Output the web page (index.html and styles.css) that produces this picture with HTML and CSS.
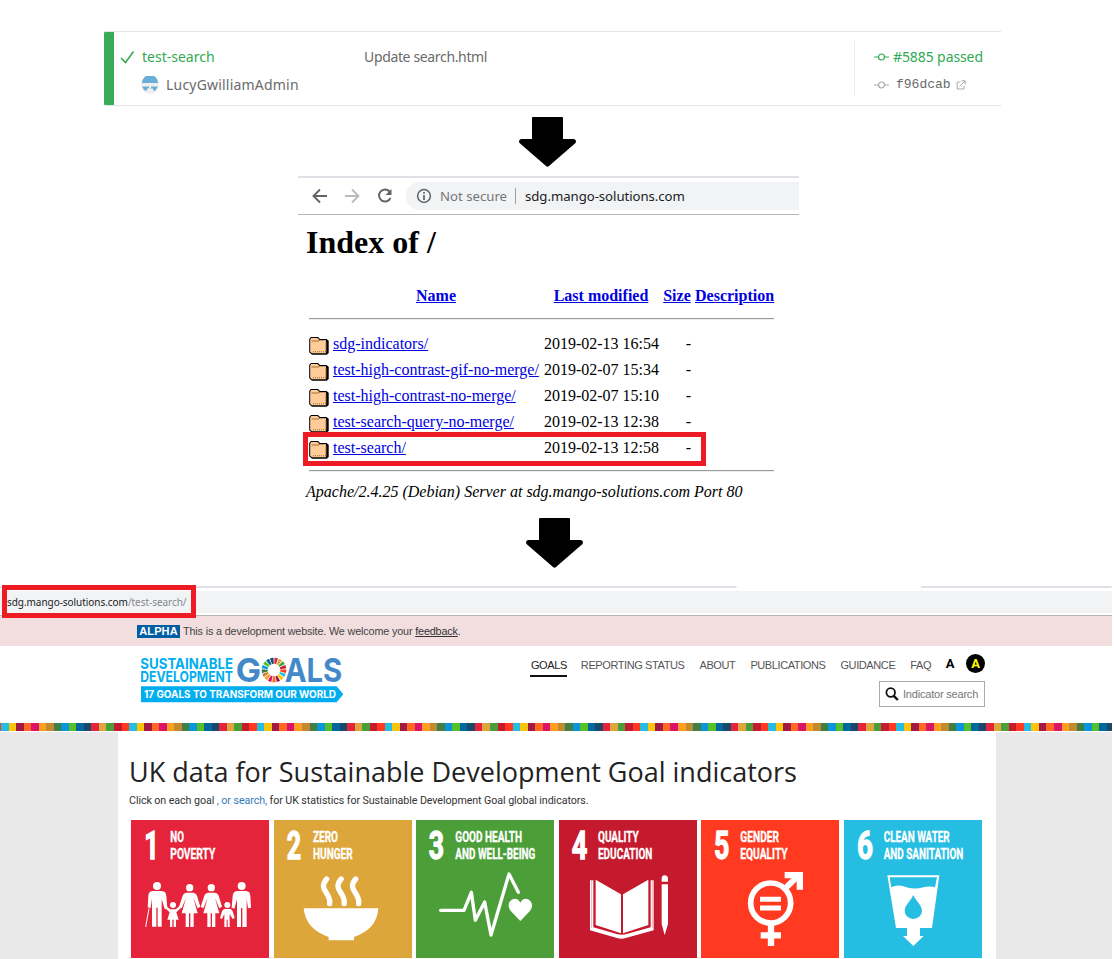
FILE: index.html
```html
<!DOCTYPE html>
<html lang="en">
<head>
<meta charset="utf-8">
<title>Search test deployment</title>
<link rel="stylesheet" href="styles.css">
</head>
<body>
<svg width="0" height="0" class="defs" aria-hidden="true">
  <symbol id="folder" viewBox="0 0 20 22">
    <path d="M2 4h7l2 2h6.500l2.200 1.800V20l-2 1.700H3L.2 19.300V6z" fill="#000"/>
    <path d="M2.300 5h6l2.500 2.300h6.200v13H3L1.200 18.800V6.500z" fill="#fc9"/>
    <path d="M2.500 8h7M9.300 8l1.700-1M17 9v10" fill="none" stroke="#963" stroke-width=".9"/>
    <path d="M4 18.800h13" stroke="#963" stroke-dasharray="1 1"/>
  </symbol>
  <symbol id="down" viewBox="0 0 57 50">
    <path d="M13 1q0-1 1-1h29q1 0 1 1v21h11q3 1 1.500 4L30 49q-1.500 1.500-3 0L.5 26q-1.500-3 1.500-4h11z" fill="#000"/>
  </symbol>
  <symbol id="commit" viewBox="0 0 15 8">
    <path d="M0 4h4M11 4h4" stroke="currentColor" stroke-width="1.100"/>
    <circle cx="7.500" cy="4" r="3" fill="none" stroke="currentColor" stroke-width="1.200"/>
  </symbol>
</svg>

<section class="pipeline">
  <div class="status"></div>
  <div class="branch">
    <div class="branch-name"><svg width="15" height="14" viewBox="0 0 15 14"><path d="M1 8l4.500 4.500L13.500 1.500" fill="none" stroke="#31a952" stroke-width="1.500"/></svg><span>test-search</span></div>
    <div class="author"><svg width="18" height="18" viewBox="0 0 18 18"><circle cx="9" cy="9" r="9" fill="#eee"/><path d="M1 7a8 8 0 0 1 16 0zM1 10.500h7v2H6v2H3.500zM17 10.500h-7v2h2v2h2.500z" fill="#68aed6"/></svg><span>LucyGwilliamAdmin</span></div>
  </div>
  <div class="message">Update search.html</div>
  <div class="build">
    <div class="passed"><svg width="15" height="8"><use href="#commit"/></svg><span>#5885 passed</span></div>
    <div class="sha"><svg width="15" height="8"><use href="#commit"/></svg><span>f96dcab</span><svg class="ext" width="10" height="10" viewBox="0 0 10 10"><path d="M4.500 2H1.200v7H8V6M3.500 6.500L9 1M5.500.8h3.700v3.700" fill="none" stroke="#aaa"/></svg></div>
  </div>
</section>

<svg class="arrow first" width="57" height="50"><use href="#down"/></svg>

<section class="browser">
  <div class="toolbar">
    <svg class="controls" width="88" height="18" viewBox="0 0 88 18" fill="none" stroke-width="1.900">
      <path d="M17 9H4M10 2.500L3.500 9 10 15.500" stroke="#5f6368"/>
      <path d="M35 9h13M42 2.500L48.500 9 42 15.500" stroke="#b8babd"/>
      <path d="M79.500 4.500A6 6 0 1 0 80.500 11" stroke="#5f6368"/><path d="M81.500 2v6h-6z" fill="#5f6368"/>
    </svg>
    <div class="address">
      <svg width="16" height="16" viewBox="0 0 16 16"><circle cx="8" cy="8" r="6.400" fill="none" stroke="#5f6368" stroke-width="1.500"/><path d="M8 7v5M8 4v1.800" stroke="#5f6368" stroke-width="1.700"/></svg>
      <span class="insecure">Not secure</span><i></i><span class="url">sdg.mango-solutions.com</span>
    </div>
  </div>
  <div class="listing">
    <h1>Index of /</h1>
    <table>
      <tr><th class="c-icon"></th><th class="c-name"><a href="#">Name</a></th><th class="c-date"><a href="#">Last modified</a></th><th class="c-size"><a href="#">Size</a></th><th class="c-desc"><a href="#">Description</a></th></tr>
      <tr><td colspan="5"><hr></td></tr>
      <tr><td><svg width="20" height="22"><use href="#folder"/></svg></td><td><a href="#">sdg-indicators/</a></td><td class="r">2019-02-13 16:54</td><td class="r">-</td><td></td></tr>
      <tr><td><svg width="20" height="22"><use href="#folder"/></svg></td><td><a href="#">test-high-contrast-gif-no-merge/</a></td><td class="r">2019-02-07 15:34</td><td class="r">-</td><td></td></tr>
      <tr><td><svg width="20" height="22"><use href="#folder"/></svg></td><td><a href="#">test-high-contrast-no-merge/</a></td><td class="r">2019-02-07 15:10</td><td class="r">-</td><td></td></tr>
      <tr><td><svg width="20" height="22"><use href="#folder"/></svg></td><td><a href="#">test-search-query-no-merge/</a></td><td class="r">2019-02-13 12:38</td><td class="r">-</td><td></td></tr>
      <tr><td><svg width="20" height="22"><use href="#folder"/></svg></td><td><a href="#">test-search/</a></td><td class="r">2019-02-13 12:58</td><td class="r">-</td><td></td></tr>
      <tr><td colspan="5"><hr></td></tr>
    </table>
    <address>Apache/2.4.25 (Debian) Server at sdg.mango-solutions.com Port 80</address>
  </div>
  <div class="mark row-mark"></div>
</section>

<svg class="arrow second" width="57" height="50"><use href="#down"/></svg>

<section class="site">
  <div class="tabs"><span></span><span></span></div>
  <div class="omnibox">sdg.mango-solutions.com<span>/test-search/</span></div>
  <div class="mark url-mark"></div>
  <div class="banner"><b>ALPHA</b><span>This is a development website. We welcome your <a href="#">feedback</a>.</span></div>
  <header>
    <svg class="logo" width="220" height="62" viewBox="0 0 660 186">
      <g fill="#00aeef" font-weight="700" font-size="43.500">
        <text x="31" y="62" textLength="278" lengthAdjust="spacingAndGlyphs">SUSTAINABLE</text>
        <text x="31" y="101" textLength="278" lengthAdjust="spacingAndGlyphs">DEVELOPMENT</text>
      </g>
      <g fill="#4389c9" font-weight="700" font-size="99">
        <text x="317" y="102" textLength="76" lengthAdjust="spacingAndGlyphs">G</text>
        <text x="464" y="102" textLength="173" lengthAdjust="spacingAndGlyphs">ALS</text>
      </g>
      <g id="wheel" fill="none" stroke-width="18"></g>
      <path d="M33 115h587l20 24-20 24H33z" fill="#00aeef"/>
      <text x="42" y="150" fill="#fff" font-weight="700" font-size="31" textLength="576" lengthAdjust="spacingAndGlyphs">17 GOALS TO TRANSFORM OUR WORLD</text>
    </svg>
    <div class="right">
      <nav><a class="on">GOALS</a><a>REPORTING STATUS</a><a>ABOUT</a><a>PUBLICATIONS</a><a>GUIDANCE</a><a>FAQ</a><b>A</b><b class="hc">A</b></nav>
      <div class="search"><svg width="14" height="14" viewBox="0 0 14 14"><circle cx="5.700" cy="5.500" r="4.300" fill="none" stroke="#111" stroke-width="1.800"/><path d="M8.800 8.800l4 4.200" stroke="#111" stroke-width="2.400"/></svg><span>Indicator search</span></div>
    </div>
  </header>
  <div class="stripes"></div>
  <div class="body">
    <main>
      <h2>UK data for Sustainable Development Goal indicators</h2>
      <p>Click on each goal <a>, or search,</a> for UK statistics for Sustainable Development Goal global indicators.</p>
      <div class="goals">
        <svg viewBox="18 15 414 414" class="g1">
          <text class="num" x="58" y="133" textLength="44" lengthAdjust="spacingAndGlyphs">1</text>
          <text x="136" y="82" textLength="41" lengthAdjust="spacingAndGlyphs">NO</text><text x="136" y="132" textLength="135" lengthAdjust="spacingAndGlyphs">POVERTY</text>
          <g fill="#fff">
            <g id="man"><circle cx="96" cy="213" r="12"/><path d="M82 228h28q13 1 14 14l3 38-8 2-9-30v83H98v-57h-4v57H81v-85l-4 29-9-2 2-35q1-13 12-14z"/></g>
            <path d="M72 280l-10 56" stroke="#fff" stroke-width="3"/>
            <g id="woman"><circle cx="194" cy="218" r="11"/><path d="M184 233h21q9 1 11 9l10 33-8 5-13-31 13 46h-12v41h-10v-41h-4v41h-10v-41h-12l13-46-13 31-8-5 11-33q2-8 11-9z"/></g>
            <use href="#woman" x="65"/>
            <circle cx="144" cy="270" r="9"/><path d="M123 273l13 10h16l12-10 4 5-14 14 7 22h-8v22h-7v-22h-4v22h-7v-22h-8l7-22-15-14z"/>
            <circle cx="307" cy="270" r="9"/><path d="M299 282h17q5 1 7 7l6 20-6 3-9-15v39h-6v-22h-3v22h-7v-39l-7 15-6-3 6-20q2-6 8-7z"/>
            <g><circle cx="350" cy="213" r="12"/><path d="M336 228h28q11 1 12 14l2 36-9 2-4-29v85h-13v-57h-4v57h-12v-83l-8 28-8-3 3-35q1-14 13-15z"/></g>
          </g>
        </svg>
        <svg viewBox="447 15 414 414" class="g2">
          <text class="num" x="485" y="133" textLength="43" lengthAdjust="spacingAndGlyphs">2</text>
          <text x="564" y="82" textLength="75" lengthAdjust="spacingAndGlyphs">ZERO</text><text x="564" y="132" textLength="119" lengthAdjust="spacingAndGlyphs">HUNGER</text>
          <path d="M536 280h224q-4 63-73 86v10h-76v-10q-69-23-75-86z" fill="#fff"/>
          <path id="steam" d="M605 192c-15 18-10 28-2 40s13 23 11 34" fill="none" stroke="#fff" stroke-width="16" stroke-linecap="round"/>
          <use href="#steam" x="43.500"/><use href="#steam" x="87"/>
        </svg>
        <svg viewBox="18 15 414 414" class="g3">
          <text class="num" x="56" y="133" textLength="46" lengthAdjust="spacingAndGlyphs">3</text>
          <text x="136" y="82" textLength="200" lengthAdjust="spacingAndGlyphs">GOOD HEALTH</text><text x="136" y="132" textLength="240" lengthAdjust="spacingAndGlyphs">AND WELL-BEING</text>
          <path d="M92 286h70l22-54 12 84 28-55 19 99 54-183 28 55" fill="none" stroke="#fff" stroke-width="10" stroke-linecap="round" stroke-linejoin="round"/>
          <path d="M331 318l-28-29c-23-29 17-53 28-26 11-27 51-3 28 26z" fill="#fff"/>
        </svg>
        <svg viewBox="447 15 414 414" class="g4">
          <text class="num" x="485" y="133" textLength="47" lengthAdjust="spacingAndGlyphs">4</text>
          <text x="564" y="82" textLength="122" lengthAdjust="spacingAndGlyphs">QUALITY</text><text x="564" y="132" textLength="163" lengthAdjust="spacingAndGlyphs">EDUCATION</text>
          <path d="M557 194l76 44v117l-76-25zM715 194l-76 44v117l76-25z" fill="#fff"/>
          <path d="M540 196l10 0v141l70 20q15 5 30 0l72-20V196h9v150l-84 23q-13 4-26 0l-81-23z" fill="#fff"/>
          <path d="M545 196v143M727 196v143" stroke="#c5192d" stroke-width="1"/>
          <path d="M755 208h19v119l-10 34-9-34zM755 200v-9q0-10 9-10t10 10v9z" fill="#fff"/>
        </svg>
        <svg viewBox="18 15 414 414" class="g5">
          <text class="num" x="57" y="133" textLength="46" lengthAdjust="spacingAndGlyphs">5</text>
          <text x="136" y="82" textLength="116" lengthAdjust="spacingAndGlyphs">GENDER</text><text x="136" y="132" textLength="142" lengthAdjust="spacingAndGlyphs">EQUALITY</text>
          <g fill="none" stroke="#fff"><circle cx="227" cy="264" r="60" stroke-width="17"/><path d="M228 325v68M197 361h61" stroke-width="19"/><path d="M195 253h63M195 279h63" stroke-width="15"/><path d="M270 221l43-42" stroke-width="18"/></g>
          <path d="M269 171h55v53h-19v-34h-36z" fill="#fff"/>
        </svg>
        <svg viewBox="447 15 414 414" class="g6">
          <text class="num" x="486" y="133" textLength="48" lengthAdjust="spacingAndGlyphs">6</text>
          <text x="566" y="82" textLength="198" lengthAdjust="spacingAndGlyphs">CLEAN WATER</text><text x="566" y="132" textLength="239" lengthAdjust="spacingAndGlyphs">AND SANITATION</text>
          <path d="M577 181h156l-22 158h-36v24h11l-31 30-31-30h12v-24h-33zM584 187l5 30q18-9 36-3 30 12 60 3 18-5 35 0l6-30z" fill="#fff" fill-rule="evenodd"/>
          <path d="M655 240c8 18 26 31 26 47a26 25 0 0 1-52 0c0-16 18-29 26-47z" fill="#26bde2"/>
        </svg>
      </div>
    </main>
  </div>
</section>
<script src="wheel.js"></script>
</body>
</html>
```
FILE: wheel.js
```js
// Draws the seventeen-colour ring that stands for the letter O in the logo.
var colours = ["#e5243b", "#dda63a", "#4c9f38", "#c5192d", "#ff3a21", "#26bde2", "#fcc30b", "#a21942", "#fd6925", "#dd1367", "#fd9d24", "#bf8b2e", "#3f7e44", "#0a97d9", "#56c02b", "#00689d", "#19486a"];
var wheel = document.getElementById("wheel");
colours.forEach(function (colour, i) {
  var step = 2 * Math.PI / 17, a = i * step + 0.04, b = (i + 1) * step - 0.04, r = 28;
  function at(t) { return (432 + r * Math.sin(t)).toFixed(2) + " " + (66 - r * Math.cos(t)).toFixed(2); }
  var arc = document.createElementNS("http://www.w3.org/2000/svg", "path");
  arc.setAttribute("d", "M" + at(a) + "A" + r + " " + r + " 0 0 1 " + at(b));
  arc.setAttribute("stroke", colour);
  wheel.appendChild(arc);
});
```
FILE: styles.css
```css
* { box-sizing: border-box; }
body { margin: 0; width: 1114px; height: 959px; overflow: hidden; background: #fff; display: flex; flex-direction: column; }
svg { display: block; flex: none; }
.defs { position: absolute; }

.pipeline { margin: 31px 0 0 104px; width: 897px; height: 75px; flex: none; display: flex; align-items: stretch; border-top: 1px solid #e5e5e5; border-bottom: 1px solid #e5e5e5; font: 14px/20px "Noto Sans", sans-serif; color: #6b6b6b; }
.status { width: 10px; background: #3aab58; border-radius: 1px 0 0 1px; }
.branch { width: 250px; padding: 15px 0 0 6px; }
.branch-name { display: flex; align-items: center; gap: 7px; color: #31a952; }
.author { display: flex; align-items: center; gap: 7px; padding: 8px 0 0 21px; letter-spacing: .2px; }
.message { width: 490px; padding-top: 15px; letter-spacing: -.35px; }
.build { margin: 9px 0; padding: 6px 0 0 19px; border-left: 1px solid #eee; }
.passed, .sha { display: flex; align-items: center; gap: 4px; }
.passed { color: #31a952; letter-spacing: -.1px; }
.sha { margin-top: 7px; gap: 7px; font-family: "Liberation Mono", monospace; font-size: 13px; }
.sha span { padding-top: 1px; }
.sha .ext { margin-left: -2px; }
.sha svg { color: #aaa; }

.arrow { flex: none; }
.first { margin: 11px 0 0 519px; }
.second { margin: 4px 0 0 526px; }

.browser { position: relative; flex: none; margin: 9px 0 0 298px; width: 501px; height: 338px; border-top: 2px solid #dee1e6; }
.toolbar { height: 37px; border-bottom: 1px solid #b6b6b6; display: flex; align-items: center; padding-left: 12px; gap: 8px; }
.address { flex: 1; height: 28px; border-radius: 14px 0 0 14px; background: #f1f3f4; display: flex; align-items: center; padding-left: 10px; font: 13.200px/20px "Noto Sans", sans-serif; }
.insecure { margin-left: 8px; color: #757678; }
.address i { width: 1px; height: 16px; background: #9aa0a6; margin: 0 9px 0 8px; }
.url { color: #202124; letter-spacing: -.05px; }
.listing { padding: 9px 8px 0; font: 16px/18px "Liberation Serif", serif; color: #000; }
.listing h1 { margin: 0 0 21px; font-size: 32px; line-height: 36px; }
.listing table { width: 471px; table-layout: fixed; border-spacing: 2px; margin: 0; }
.listing th, .listing td { padding: 2px 1px 0; white-space: nowrap; height: 24px; }
.listing td svg { margin-top: -1px; }
.listing td[colspan] { height: 20px; padding: 1px; }
.listing a { color: #0000e0; text-decoration: underline; }
.c-icon { width: 22px; }
.c-name { width: 208px; }
.c-date { width: 118px; }
.c-size { width: 30px; }
.c-desc { width: 81px; }
.listing hr { margin: 8px 0; height: 2px; border: 0; border-top: 1px solid #9a9a9a; border-bottom: 1px solid #eee; }
.r { text-align: right; }
.mark { position: absolute; border: 5px solid #ed1c24; }
.row-mark { left: 5px; top: 254px; width: 403px; height: 34px; }

.site { position: relative; flex: none; width: 1112px; margin-top: 18px; font-family: "Liberation Sans", sans-serif; }
.tabs { display: flex; justify-content: space-between; height: 5px; }
.tabs span { height: 2px; width: 737px; background: #dee1e6; border-radius: 0 0 2px 0; }
.tabs span + span { width: 191px; }
.omnibox { height: 22px; background: #f1f3f4; padding-left: 7px; font: 10px/22px "Noto Sans", sans-serif; letter-spacing: -.05px; color: #202124; }
.omnibox span { color: #85888c; }
.url-mark { left: 2px; top: -1px; width: 194px; height: 33px; }
.banner { margin-top: 2px; height: 31px; border-top: 1px solid #b8b4b4; background: #f2dede; display: flex; align-items: center; gap: 3px; padding-left: 137px; font-size: 10.800px; letter-spacing: -.15px; color: #444; }
.banner b { background: #005ea5; color: #fff; font-size: 11px; line-height: 13px; width: 43px; text-align: center; letter-spacing: .1px; }
.banner a { color: #333; text-decoration: underline; }
header { height: 77px; display: flex; justify-content: space-between; padding: 2px 127px 0 130px; }
.right { display: flex; flex-direction: column; align-items: flex-end; padding-top: 6px; }
nav { display: flex; align-items: flex-start; height: 24px; font-size: 11px; line-height: 20px; letter-spacing: -.4px; color: #555; }
nav a { margin: 1px 14px 0 0; padding: 0 .5px; white-space: nowrap; }
nav .on { color: #222; border-bottom: 2px solid #111; margin-right: 13px; }
nav b { color: #000; font: 700 13px/20px Roboto, sans-serif; margin-right: 12px; }
nav .hc { width: 19px; height: 19px; border-radius: 50%; background: #000; color: #ff0; text-align: center; margin-right: 0; letter-spacing: 0; }
.search { margin-top: 3px; width: 106px; height: 26px; border: 1px solid #aaa; display: flex; align-items: center; gap: 4px; padding-left: 5px; font-size: 11px; letter-spacing: -.2px; color: #777; white-space: nowrap; }
.logo { font-family: Inter, sans-serif; }
.stripes { height: 8px; background: repeating-linear-gradient(90deg, #e5243b 0 7.520px, #dda63a 0 15.040px, #4c9f38 0 22.560px, #c5192d 0 30.080px, #ff3a21 0 37.600px, #26bde2 0 45.120px, #fcc30b 0 52.640px, #a21942 0 60.160px, #fd6925 0 67.680px, #dd1367 0 75.200px, #fd9d24 0 82.720px, #bf8b2e 0 90.240px, #3f7e44 0 97.760px, #0a97d9 0 105.280px, #56c02b 0 112.800px, #00689d 0 120.320px, #19486a 0 127.840px); background-position: -36.400px 0; background-size: 1278.400px 8px; }
.body { background: #e9e9e9; border-top: 1px solid #fff; height: 228px; padding-left: 118px; }
main { width: 878px; height: 227px; background: #fff; padding: 20px 0 0 11px; }
h2 { margin: 0; font: 400 27px/40px "Open Sans", sans-serif; color: #222; white-space: nowrap; }
p { margin: 0; font: 10.700px/18px Roboto, sans-serif; letter-spacing: -.08px; color: #333; white-space: nowrap; }
p a { color: #337ab7; }
.goals { display: flex; gap: 4.600px; padding: 10px 0 0 2px; }
.goals > svg { width: 138px; height: 138px; }
.goals text { font: 700 45px Roboto, sans-serif; fill: #fff; stroke: #fff; stroke-width: 1px; }
.goals .num { font-size: 118px; stroke-width: 4px; }
.g1 { background: #e5243b; }
.g2 { background: #dda63a; }
.g3 { background: #4c9f38; }
.g4 { background: #c5192d; }
.g5 { background: #ff3a21; }
.g6 { background: #26bde2; }
```
